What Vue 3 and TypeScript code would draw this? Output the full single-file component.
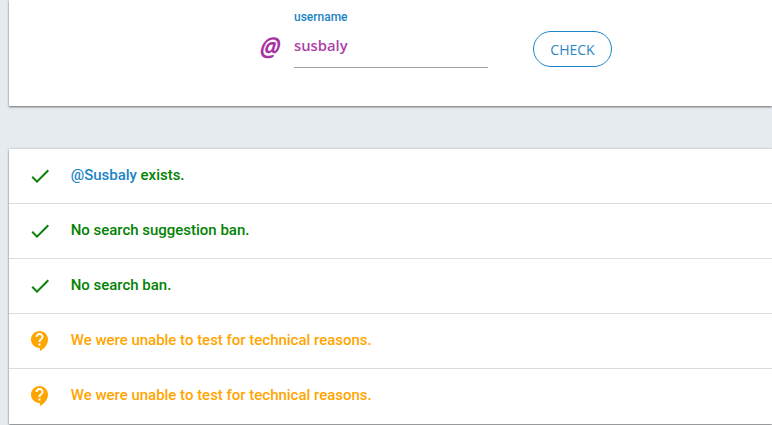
<script setup lang="ts">
interface Row { kind: 'ok' | 'unknown'; handle?: string; text: string }
const rows: Row[] = [
  { kind: 'ok', handle: '@Susbaly', text: ' exists.' },
  { kind: 'ok', text: 'No search suggestion ban.' },
  { kind: 'ok', text: 'No search ban.' },
  { kind: 'unknown', text: 'We were unable to test for technical reasons.' },
  { kind: 'unknown', text: 'We were unable to test for technical reasons.' }
]
</script>

<template>
  <div class="page">
    <section class="form-card">
      <span class="at"><span class="at-glyph">@</span></span>
      <div class="field">
        <div class="label">username</div>
        <div class="value">susbaly</div>
      </div>
      <button class="check" type="button">CHECK</button>
    </section>
    <section class="results">
      <div v-for="(row, i) in rows" :key="i" class="row" :class="row.kind">
        <span class="icon">
          <svg v-if="row.kind === 'ok'" width="24" height="24" viewBox="0 0 24 24">
            <path d="M21 7 L9 19 L3.5 13.5 L4.91 12.09 L9 16.17 L19.59 5.59 Z" />
          </svg>
          <svg v-else width="24" height="24" viewBox="0 0 24 24">
            <path d="M11.5 2C6.81 2 3 5.81 3 10.5S6.81 19 11.5 19H12v3c4.86-2.34 8-7 8-11.5C20 5.81 16.19 2 11.5 2zm1 14.5h-2v-2h2v2zm0-3.5h-2c0-3.25 3-3 3-5 0-1.1-.9-2-2-2s-2 .9-2 2h-2c0-2.21 1.79-4 4-4s4 1.79 4 4c0 2.5-3 2.75-3 5z" />
          </svg>
        </span>
        <span class="msg"><span v-if="row.handle" class="handle">{{ row.handle }}</span>{{ row.text }}</span>
      </div>
    </section>
  </div>
</template>

<style>
html, body { margin: 0; overflow: hidden; background: #e6ebef; }
</style>

<style scoped>
.page {
  width: 772px;
  height: 425px;
  padding-left: 9px;
  box-sizing: border-box;
  background: #e6ebef;
  overflow: hidden;
  font-family: Roboto, sans-serif;
}
.form-card {
  height: 106px;
  background: #fff;
  box-shadow: 0 1px 2px rgba(0, 0, 0, 0.55);
  display: flex;
  align-items: flex-start;
  padding-left: 251px;
  box-sizing: border-box;
}
.at {
  width: 34px;
  margin-top: 32px;
  font: 700 24px/28px "Open Sans", sans-serif;
  color: #a832a4;
}
.at-glyph {
  display: inline-block;
  transform: skewX(-14deg) scale(0.94, 1.1);
}
.field { width: 194px; height: 67px; border-bottom: 1px solid #a3a3a3; }
.label {
  margin-top: 10px;
  font-size: 12px;
  line-height: 14px;
  font-weight: 500;
  color: #1b84c6;
}
.value {
  font: 600 14.8px/22px "Open Sans", sans-serif;
  color: #ad3fa9;
  height: 22px;
  margin-top: 10px;
}
.check {
  margin: 31px 0 0 45px;
  width: 79px;
  height: 36px;
  padding: 1px 0 0;
  border: 1px solid #1b84c6;
  border-radius: 18px;
  background: #fff;
  color: #2a88c4;
  font: 14px "Open Sans", sans-serif;
}
.results {
  margin-top: 43px;
  background: #fff;
  box-shadow: 0 1px 2px rgba(0, 0, 0, 0.5), 0 -1px 2px rgba(0, 0, 0, 0.08);
}
.row {
  height: 55px;
  box-sizing: border-box;
  border-bottom: 1px solid #dcdcdc;
  display: flex;
  align-items: center;
  padding-left: 19px;
}
.row:last-child { border-bottom-color: transparent; }
.icon { width: 43px; height: 24px; display: block; }
.icon svg { display: block; }
.ok svg { fill: #0a820a; }
.unknown svg { fill: #ffa500; }
.msg { font-size: 14.97px; font-weight: 500; line-height: 20px; margin-top: -2px; margin-left: -0.3px; }
.ok .msg { color: #048204; }
.unknown .msg { color: #ffa500; }
.handle { color: #1b84c6; }
</style>
